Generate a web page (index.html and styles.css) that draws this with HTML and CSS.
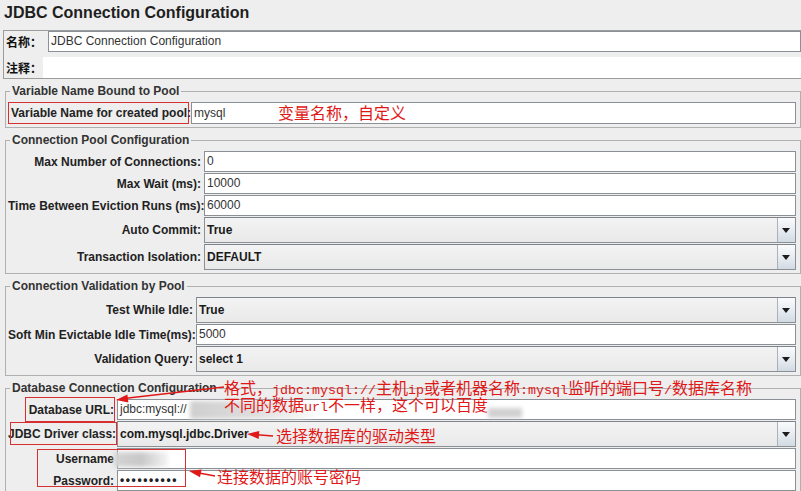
FILE: index.html
```html
<!DOCTYPE html>
<html>
<head>
<meta charset="utf-8">
<link rel="stylesheet" href="styles.css">
</head>
<body>
<div class="page">
  <h1 class="title">JDBC Connection Configuration</h1>

  <div class="name-panel">
    <div class="name-row">
      <span class="cn-label">名称：</span>
      <div class="field">JDBC Connection Configuration</div>
    </div>
    <div class="comment-row">
      <span class="cn-label short">注释：</span>
      <div class="comment-area"></div>
    </div>
  </div>

  <fieldset class="sec sec-var">
    <legend>Variable Name Bound to Pool</legend>
    <div class="form">
      <div class="lbl boxed">Variable Name for created pool:</div>
      <div class="field tall">mysql</div>
    </div>
  </fieldset>

  <fieldset class="sec sec-pool">
    <legend>Connection Pool Configuration</legend>
    <div class="form">
      <div class="lbl">Max Number of Connections:</div>
      <div class="field">0</div>
      <div class="lbl">Max Wait (ms):</div>
      <div class="field">10000</div>
      <div class="lbl">Time Between Eviction Runs (ms):</div>
      <div class="field">60000</div>
      <div class="lbl">Auto Commit:</div>
      <div class="combo"><span class="val">True</span><span class="btn"></span></div>
      <div class="lbl">Transaction Isolation:</div>
      <div class="combo"><span class="val">DEFAULT</span><span class="btn"></span></div>
    </div>
  </fieldset>

  <fieldset class="sec sec-valid">
    <legend>Connection Validation by Pool</legend>
    <div class="form">
      <div class="lbl">Test While Idle:</div>
      <div class="combo"><span class="val">True</span><span class="btn"></span></div>
      <div class="lbl">Soft Min Evictable Idle Time(ms):</div>
      <div class="field">5000</div>
      <div class="lbl">Validation Query:</div>
      <div class="combo"><span class="val">select 1</span><span class="btn"></span></div>
    </div>
  </fieldset>

  <fieldset class="sec sec-db">
    <legend>Database Connection Configuration</legend>
    <div class="form">
      <div class="lbl">Database URL:</div>
      <div class="field">jdbc:mysql://</div>
      <div class="lbl">JDBC Driver class:</div>
      <div class="combo"><span class="val">com.mysql.jdbc.Driver</span><span class="btn"></span></div>
      <div class="lbl">Username</div>
      <div class="field short"></div>
      <div class="lbl">Password:</div>
      <div class="field short dots">••••••••••</div>
    </div>
  </fieldset>

  <!-- annotations drawn over the form -->
  <div class="blur blur-url"></div>
  <div class="blur blur-url2"></div>
  <div class="blur blur-user"></div>

  <div class="redbox box-url"></div>
  <div class="redbox box-driver"></div>
  <div class="redbox box-account"></div>

  <div class="note note-var">变量名称，自定义</div>
  <div class="note note-url"><div>格式，<span class="mono">jdbc:mysql://</span>主机<span class="mono">ip</span>或者机器名称<span class="mono">:mysql</span>监听的端口号<span class="mono">/</span>数据库名称</div><div>不同的数据<span class="mono">url</span>不一样，这个可以百度</div></div>
  <div class="note note-driver">选择数据库的驱动类型</div>
  <div class="note note-account">连接数据的账号密码</div>

  <svg class="arrows" width="801" height="491" viewBox="0 0 801 491">
    <g stroke="#e01818" stroke-width="1.6" fill="none">
      <line x1="224" y1="387" x2="126" y2="398.3"/>
      <line x1="273" y1="436" x2="257" y2="434.8"/>
      <line x1="215" y1="476" x2="199" y2="473"/>
    </g>
    <g fill="#e01818">
      <polygon points="116,400 128.4,402.5 127.4,394.5"/>
      <polygon points="247,434 258.7,438.9 259.3,430.9"/>
      <polygon points="189,471 200,477.2 201.6,469.4"/>
    </g>
  </svg>
</div>
</body>
</html>
```

FILE: styles.css
```css
html, body {
  margin: 0;
  padding: 0;
}

body {
  background: #eeeeee;
  font-family: "Liberation Sans", Arial, sans-serif;
  font-size: 12px;
  color: #222;
}

.page {
  position: relative;
  width: 801px;
  height: 491px;
  overflow: hidden;
}

.title {
  margin: 0;
  padding: 0 4px;
  height: 30px;
  line-height: 25px;
  font-size: 16px;
  font-weight: bold;
  color: #1e1e1e;
}

/* name / comment panel */
.name-panel {
  margin-left: 3px;
  border: 1px solid #9c9c9c;
  border-right: 0;
}

.name-row,
.comment-row {
  display: flex;
  align-items: center;
  height: 21px;
}

.comment-row {
  margin-top: 5px;
}

.cn-label {
  box-sizing: border-box;
  flex: none;
  width: 44px;
  padding-left: 2px;
  font-family: "Noto Sans CJK SC", sans-serif;
  font-weight: bold;
  font-size: 12px;
  line-height: 21px;
  white-space: nowrap;
  color: #111;
}

.cn-label.short {
  width: 39px;
}

.name-row .field {
  flex: 1;
}

.comment-area {
  flex: 1;
  height: 21px;
  background: #fff;
}

/* sections */
.sec {
  margin: 5px 0 0 5px;
  padding: 4px 4px 3px 2px;
  border: 1px solid #b0b0b0;
  min-width: 0;
}

.sec legend {
  margin-left: 2px;
  padding: 0 2px;
  font-weight: bold;
  font-size: 12px;
  line-height: 14px;
  color: #333;
}

.form {
  display: grid;
  grid-template-columns: var(--lw) 1fr;
  column-gap: 2px;
  row-gap: 1px;
  align-items: center;
}

.sec-var { --lw: 181px; }
.sec-pool { --lw: 194px; }
.sec-valid { --lw: 186px; }
.sec-db { --lw: 107px; }

.lbl {
  box-sizing: border-box;
  text-align: right;
  font-weight: bold;
  white-space: nowrap;
  padding-right: 1px;
  color: #222;
}

.lbl.boxed {
  height: 22px;
  line-height: 20px;
  border: 1px solid #d83030;
  padding-right: 0;
  text-align: left;
  padding-left: 2px;
}

.field {
  box-sizing: border-box;
  height: 21px;
  border: 1px solid #8b9097;
  background: #fff;
  padding: 0 2px;
  line-height: 19px;
  color: #333;
  white-space: nowrap;
}

.field.tall {
  height: 22px;
  line-height: 20px;
}

.field.dots {
  font-weight: bold;
  letter-spacing: 1.6px;
  color: #222;
}

.combo {
  box-sizing: border-box;
  height: 26px;
  display: flex;
  border: 1px solid #8b9097;
  border-top-color: #7d838b;
  background: linear-gradient(#f3f3f3, #e9e9e9);
  font-weight: bold;
  color: #1a1a1a;
}

.combo .val {
  flex: 1;
  padding-left: 2px;
  line-height: 24px;
}

.combo .btn {
  position: relative;
  width: 17px;
  border-left: 1px solid #a9b1ba;
  background: linear-gradient(#fafbfc, #e4e9ef 60%, #d2dae3);
}

.combo .btn::after {
  content: "";
  position: absolute;
  left: 4px;
  top: 10px;
  border-left: 4.5px solid transparent;
  border-right: 4.5px solid transparent;
  border-top: 5px solid #1c1c1c;
}

/* annotations */
.note {
  position: absolute;
  color: #e01818;
  font-family: "Noto Sans CJK SC", sans-serif;
  font-size: 16px;
  line-height: 17px;
  white-space: nowrap;
}

.note > div {
  height: 17px;
  line-height: 17px;
}

.mono {
  font-family: "Liberation Mono", monospace;
  font-size: 13.33px;
  line-height: 0;
}

.note-var { left: 278px; top: 104px; }
.note-url { left: 224px; top: 379px; }
.note-driver { left: 276px; top: 427px; }
.note-account { left: 217px; top: 468px; }

.redbox {
  position: absolute;
  border: 1px solid #d83030;
}

.box-url { left: 25px; top: 397px; width: 88px; height: 23px; }
.box-driver { left: 10px; top: 422px; width: 105px; height: 21px; }
.box-account { left: 37px; top: 449px; width: 147px; height: 36px; }

.blur {
  position: absolute;
  filter: blur(2px);
}

.blur-url {
  left: 190px;
  top: 401px;
  width: 130px;
  height: 18px;
  background: linear-gradient(90deg, #cfcfcf, #dedede 50%, rgba(235, 235, 235, 0.6) 85%, rgba(255, 255, 255, 0));
}

.blur-url2 {
  left: 488px;
  top: 408px;
  width: 34px;
  height: 10px;
  background: rgba(190, 190, 190, 0.7);
}

.blur-user {
  left: 114px;
  top: 452px;
  width: 54px;
  height: 15px;
  background: linear-gradient(90deg, #d4d4d4, #c8c8c8 50%, rgba(220, 220, 220, 0.3));
}

.arrows {
  position: absolute;
  left: 0;
  top: 0;
  pointer-events: none;
}
```
